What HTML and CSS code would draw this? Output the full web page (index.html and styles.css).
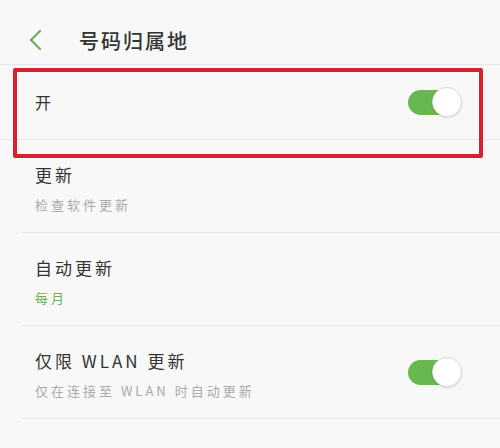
FILE: index.html
```html
<!DOCTYPE html>
<html lang="zh-CN">
<head>
  <meta charset="UTF-8">
  <title>号码归属地</title>
  <link rel="stylesheet" href="styles.css">
</head>
<body>
  <div class="header">
    <svg class="back" width="16" height="22" viewBox="0 0 16 22">
      <path d="M12 2 L3 11 L12 20" fill="none" stroke="#6aae5a" stroke-width="2.2" stroke-linecap="round" stroke-linejoin="round"/>
    </svg>
    <h1>号码归属地</h1>
  </div>

  <div class="row first">
    <span class="title">开</span>
    <div class="switch"></div>
    <div class="highlight"></div>
  </div>

  <div class="row">
    <div class="text">
      <div class="title">更新</div>
      <div class="sub">检查软件更新</div>
    </div>
  </div>

  <div class="row">
    <div class="text">
      <div class="title">自动更新</div>
      <div class="sub green">每月</div>
    </div>
  </div>

  <div class="row">
    <div class="text">
      <div class="title">仅限 WLAN 更新</div>
      <div class="sub">仅在连接至 WLAN 时自动更新</div>
    </div>
    <div class="switch"></div>
  </div>
</body>
</html>
```

FILE: styles.css
```css
body {
  margin: 0;
  background: #f8f8f8;
  font-family: "Noto Sans CJK SC", "Noto Sans", sans-serif;
  color: #333;
}
.header {
  box-sizing: border-box;
  height: 65px;
  padding-top: 16px;
  display: flex;
  align-items: center;
  border-bottom: 1px solid #e8e8e8;
}
.back {
  margin-left: 28px;
}
.header h1 {
  margin: 0 0 0 35px;
  font-size: 20px;
  font-weight: 500;
  letter-spacing: 2px;
  color: #333;
}
.row {
  position: relative;
  height: 92px;
  margin-left: 22px;
  padding: 0 42px 0 13px;
  display: flex;
  align-items: center;
  justify-content: space-between;
  border-bottom: 1px solid #e6e6e6;
}
.row.first {
  height: 74px;
  margin-left: 0;
  padding-left: 35px;
}
.row .text {
  padding-top: 4px;
}
.row .title {
  font-size: 17px;
  letter-spacing: 3px;
  color: #333;
  line-height: 26px;
}
.row.first .title {
  font-size: 16px;
}
.sub {
  margin-top: 8px;
  font-size: 13px;
  letter-spacing: 3px;
  line-height: 18px;
  color: #aaa;
}
.sub.green {
  color: #6aae5a;
}
.switch {
  position: relative;
  width: 50px;
  height: 25px;
  border-radius: 13px;
  background: #66b84f;
}
.switch::after {
  content: "";
  position: absolute;
  right: -4px;
  top: -3px;
  width: 28px;
  height: 28px;
  border-radius: 50%;
  background: #fff;
  border: 1px solid #ddd;
  box-shadow: 0 1px 2px rgba(0, 0, 0, 0.15);
}
.highlight {
  position: absolute;
  left: 13px;
  top: 3px;
  width: 462px;
  height: 82px;
  border: 4px solid #d8202e;
  border-radius: 2px;
}
```
